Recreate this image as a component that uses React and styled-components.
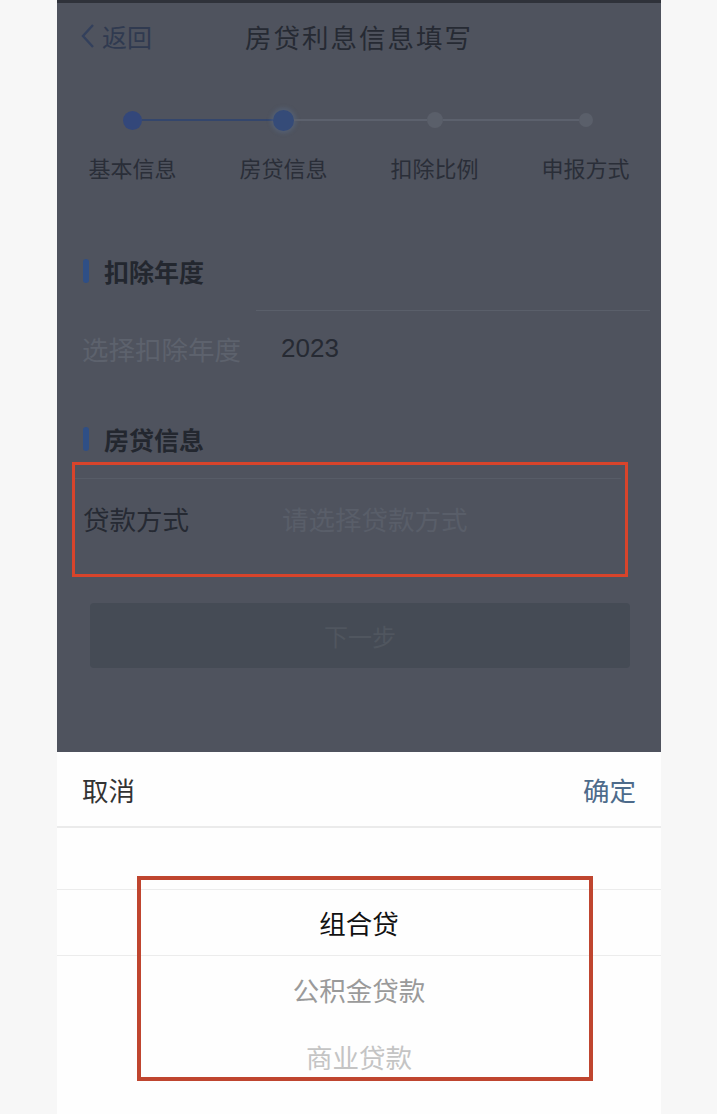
import React from "react"
import styled, { createGlobalStyle } from "styled-components"

const GlobalStyle = createGlobalStyle`
  html, body {
    margin: 0;
    padding: 0;
    background: #f7f7f7;
  }
  body {
    font-family: "Noto Sans CJK SC", "Noto Sans", sans-serif;
  }
`

const steps = [
  { label: "基本信息", size: 19, color: "#33477a", halo: false },
  { label: "房贷信息", size: 21, color: "#354b78", halo: true },
  { label: "扣除比例", size: 16, color: "#5a5f6a", halo: false },
  { label: "申报方式", size: 14, color: "#5a5f6a", halo: false },
]

const pickerItems = [
  { text: "组合贷", tone: "#111111" },
  { text: "公积金贷款", tone: "#9a9a9a" },
  { text: "商业贷款", tone: "#c4c4c4" },
]

const App = () => (
  <Page>
    <GlobalStyle />
    <Phone>
      <TopStrip />
      <Dimmed>
        <NavBar>
          <BackLink>
            <svg width="16" height="26" viewBox="0 0 16 26">
              <path d="M13 2 L3 13 L13 24" fill="none" stroke="#33405c" strokeWidth="2.4" />
            </svg>
            返回
          </BackLink>
          <NavTitle>房贷利息信息填写</NavTitle>
          <span />
        </NavBar>

        <StepGrid>
          {steps.map((s, i) => (
            <StepCell key={s.label}>
              <DotLine>
                <HalfLine
                  $hidden={i === 0}
                  $color={i <= 1 ? "#34466c" : "#5c616d"}
                />
                <Dot $size={s.size} $color={s.color} $halo={s.halo} />
                <HalfLine
                  $hidden={i === steps.length - 1}
                  $color={i === 0 ? "#34466c" : "#5c616d"}
                />
              </DotLine>
              <StepLabel>{s.label}</StepLabel>
            </StepCell>
          ))}
        </StepGrid>

        <SectionTitle $top={73}>扣除年度</SectionTitle>
        <InsetDivider />
        <FieldRow>
          <FieldLabel $muted>选择扣除年度</FieldLabel>
          <FieldValue>2023</FieldValue>
        </FieldRow>

        <SectionTitle $top={38}>房贷信息</SectionTitle>
        <LoanBlock>
          <LoanRow>
            <FieldLabel>贷款方式</FieldLabel>
            <Placeholder>请选择贷款方式</Placeholder>
          </LoanRow>
          <MarkBox $left={15} $top={0} $width={556} $height={115} $border={3} $color="#d8442b" />
        </LoanBlock>

        <NextButton>下一步</NextButton>
      </Dimmed>

      <Sheet>
        <SheetHeader>
          <SheetAction>取消</SheetAction>
          <SheetAction $primary>确定</SheetAction>
        </SheetHeader>
        <Picker>
          <PickerSpacer />
          {pickerItems.map((item, i) => (
            <PickerItem key={item.text} $selected={i === 0} $color={item.tone}>
              {item.text}
            </PickerItem>
          ))}
          <MarkBox $left={80} $top={48} $width={456} $height={205} $border={4} $color="#bf452f" />
        </Picker>
      </Sheet>
    </Phone>
  </Page>
)

const Page = styled.div`
  width: 717px;
  height: 1114px;
  overflow: hidden;
  background: #f7f7f7;
`

const Phone = styled.div`
  width: 604px;
  height: 1114px;
  margin-left: 57px;
  display: flex;
  flex-direction: column;
`

const TopStrip = styled.div`
  height: 3px;
  background: #2f323a;
`

const Dimmed = styled.div`
  height: 749px;
  background: #4f535e;
  display: flex;
  flex-direction: column;
  color: #262a33;
`

const NavBar = styled.div`
  height: 66px;
  display: grid;
  grid-template-columns: 1fr auto 1fr;
  align-items: center;
  padding: 0 23px;
`

const BackLink = styled.div`
  display: flex;
  align-items: center;
  gap: 6px;
  font-size: 25px;
  color: #303a50;
  line-height: 1;
`

const NavTitle = styled.div`
  font-size: 26.5px;
  letter-spacing: 2px;
  color: #262a33;
`

const StepGrid = styled.div`
  display: grid;
  grid-template-columns: repeat(4, 1fr);
  margin-top: 41px;
`

const StepCell = styled.div`
  display: flex;
  flex-direction: column;
  align-items: stretch;
`

const DotLine = styled.div`
  height: 20px;
  display: flex;
  align-items: center;
`

const HalfLine = styled.div`
  flex: 1;
  height: 2px;
  background: ${(p) => (p.$hidden ? "transparent" : p.$color)};
`

const Dot = styled.div`
  width: ${(p) => p.$size}px;
  height: ${(p) => p.$size}px;
  border-radius: 50%;
  background: ${(p) => p.$color};
  box-shadow: ${(p) => (p.$halo ? "0 0 4px 2px rgba(90, 110, 140, 0.45)" : "none")};
  flex-shrink: 0;
`

const StepLabel = styled.div`
  margin-top: 22px;
  text-align: center;
  font-size: 22px;
  line-height: 30px;
  color: #2a2e38;
`

const SectionTitle = styled.div`
  margin-top: ${(p) => p.$top}px;
  padding-left: 26px;
  display: flex;
  align-items: center;
  gap: 15px;
  height: 32px;
  font-size: 25px;
  font-weight: 700;
  color: #23272f;

  &::before {
    content: "";
    flex-shrink: 0;
    width: 6px;
    height: 24px;
    border-radius: 3px;
    background: #2f4f86;
  }
`

const InsetDivider = styled.div`
  height: 1px;
  margin: 23px 11px 0 199px;
  background: #5a5f6a;
`

const FieldRow = styled.div`
  height: 74px;
  display: flex;
  align-items: center;
  padding-left: 25px;
`

const FieldLabel = styled.div`
  width: 199px;
  font-size: 26.5px;
  color: ${(p) => (p.$muted ? "#5d626d" : "#262a33")};
`

const FieldValue = styled.div`
  font-family: "Liberation Sans", "Noto Sans", sans-serif;
  font-size: 26px;
  color: #262a33;
`

const Placeholder = styled.div`
  font-size: 26.5px;
  color: #595e69;
`

const LoanBlock = styled.div`
  position: relative;
  margin-top: 7px;
  height: 115px;
`

const LoanRow = styled.div`
  margin: 16px 40px 0 15px;
  height: 78px;
  display: flex;
  align-items: center;
  padding-left: 11px;
  border-top: 1px solid #575c67;
`

const MarkBox = styled.div`
  position: absolute;
  left: ${(p) => p.$left}px;
  top: ${(p) => p.$top}px;
  width: ${(p) => p.$width}px;
  height: ${(p) => p.$height}px;
  box-sizing: border-box;
  border: ${(p) => p.$border}px solid ${(p) => p.$color};
  pointer-events: none;
`

const NextButton = styled.div`
  margin: 26px 31px 0 33px;
  height: 65px;
  border-radius: 4px;
  background: #454b55;
  display: flex;
  align-items: center;
  justify-content: center;
  font-size: 24px;
  color: #50565f;
`

const Sheet = styled.div`
  flex: 1;
  background: #fefefe;
  display: flex;
  flex-direction: column;
`

const SheetHeader = styled.div`
  height: 74px;
  display: flex;
  align-items: center;
  justify-content: space-between;
  padding: 0 25px;
  border-bottom: 2px solid #ebebeb;
`

const SheetAction = styled.div`
  font-size: 26.5px;
  color: ${(p) => (p.$primary ? "#4d6b8b" : "#333333")};
`

const Picker = styled.div`
  position: relative;
  flex: 1;
  display: flex;
  flex-direction: column;
`

const PickerSpacer = styled.div`
  height: 61px;
`

const PickerItem = styled.div`
  height: 67px;
  box-sizing: border-box;
  display: flex;
  align-items: center;
  justify-content: center;
  font-size: 26.5px;
  color: ${(p) => p.$color};
  border-top: ${(p) => (p.$selected ? "1px solid #ececec" : "none")};
  border-bottom: ${(p) => (p.$selected ? "1px solid #ececec" : "none")};
`

export default App
